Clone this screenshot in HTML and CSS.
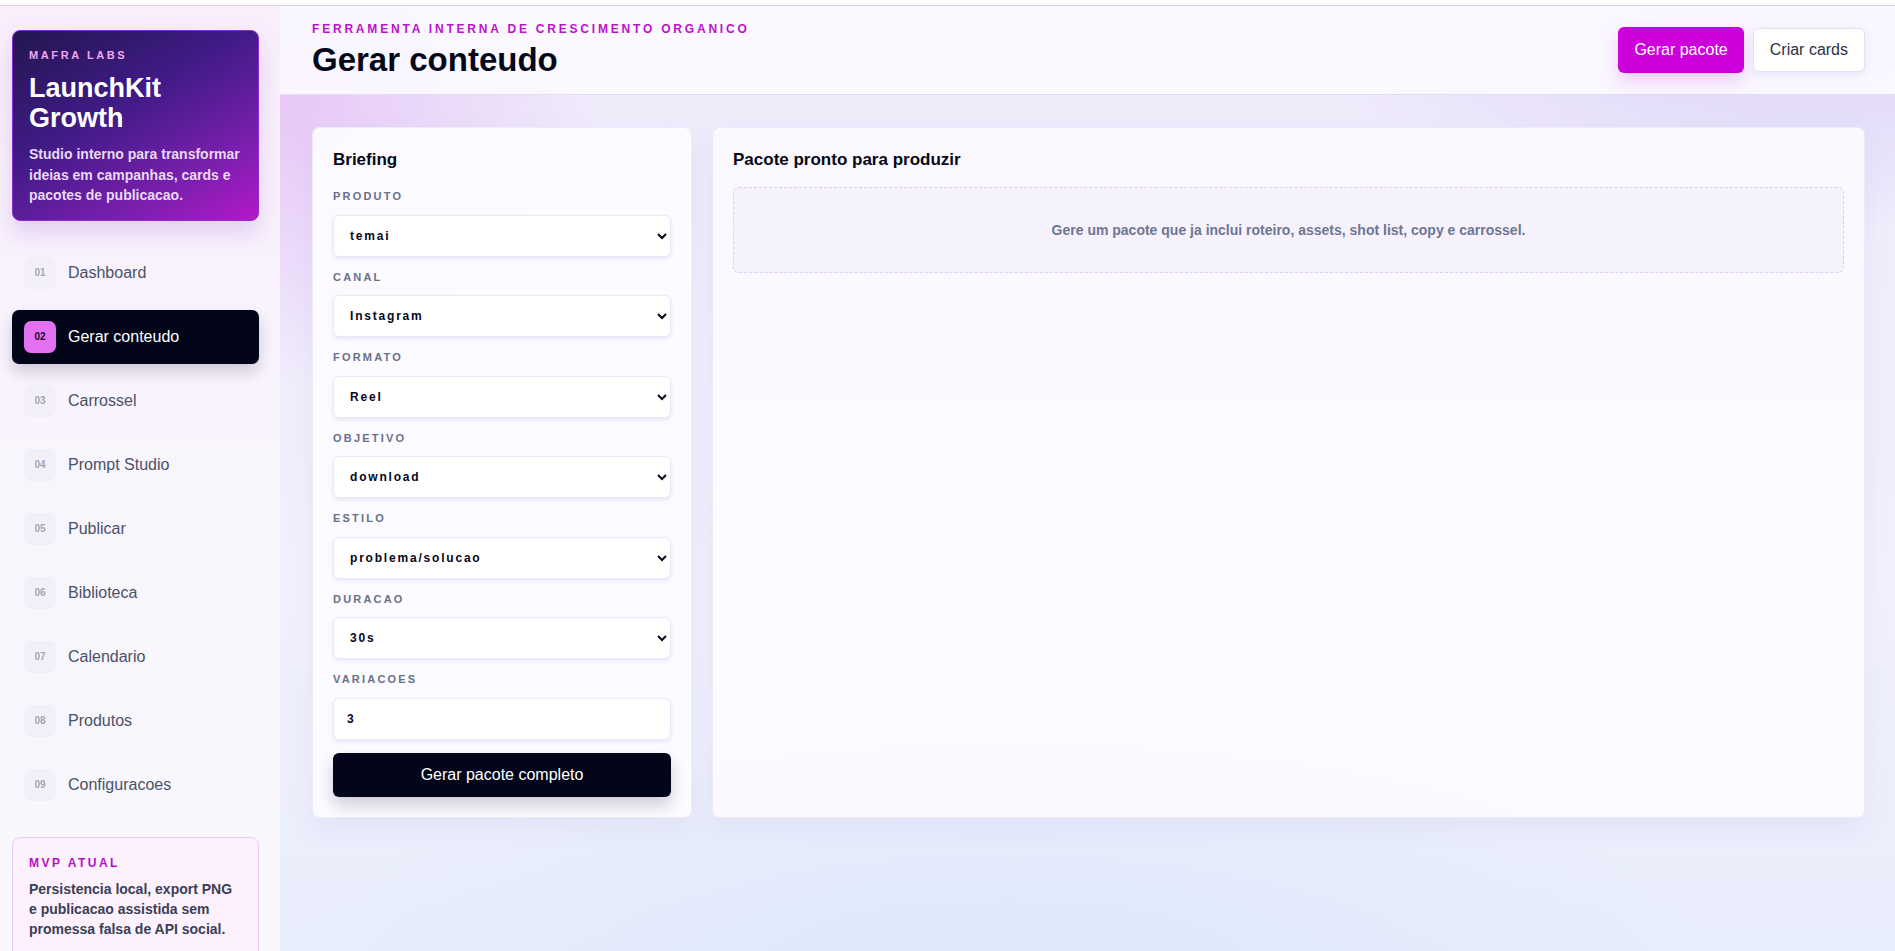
FILE: index.html
```html
<!DOCTYPE html>
<html lang="pt-BR">
<head>
    <meta charset="UTF-8">
    <meta name="viewport" content="width=device-width, initial-scale=1.0">
    <title>Gerar conteudo - LaunchKit Growth</title>
    <link rel="stylesheet" href="styles.css">
</head>
<body>
    <div class="app">
        <!-- Sidebar -->
        <aside class="sidebar">
            <div class="brand">
                <span class="brand-eyebrow">MAFRA LABS</span>
                <h2 class="brand-title">LaunchKit Growth</h2>
                <p class="brand-text">Studio interno para transformar ideias em campanhas, cards e pacotes de publicacao.</p>
            </div>

            <nav class="nav">
                <a href="#" class="nav-item"><span class="nav-num">01</span>Dashboard</a>
                <a href="#" class="nav-item active"><span class="nav-num">02</span>Gerar conteudo</a>
                <a href="#" class="nav-item"><span class="nav-num">03</span>Carrossel</a>
                <a href="#" class="nav-item"><span class="nav-num">04</span>Prompt Studio</a>
                <a href="#" class="nav-item"><span class="nav-num">05</span>Publicar</a>
                <a href="#" class="nav-item"><span class="nav-num">06</span>Biblioteca</a>
                <a href="#" class="nav-item"><span class="nav-num">07</span>Calendario</a>
                <a href="#" class="nav-item"><span class="nav-num">08</span>Produtos</a>
                <a href="#" class="nav-item"><span class="nav-num">09</span>Configuracoes</a>
            </nav>

            <div class="mvp-card">
                <span class="mvp-eyebrow">MVP ATUAL</span>
                <p>Persistencia local, export PNG e publicacao assistida sem promessa falsa de API social.</p>
            </div>
        </aside>

        <!-- Main -->
        <main class="main">
            <header class="topbar">
                <div>
                    <span class="eyebrow">FERRAMENTA INTERNA DE CRESCIMENTO ORGANICO</span>
                    <h1>Gerar conteudo</h1>
                </div>
                <div class="top-actions">
                    <button class="btn btn-primary">Gerar pacote</button>
                    <button class="btn btn-light">Criar cards</button>
                </div>
            </header>

            <section class="content">
                <form class="panel briefing" onsubmit="return false;">
                    <h3>Briefing</h3>
                    <div class="field">
                        <label>PRODUTO</label>
                        <select><option>temai</option></select>
                    </div>
                    <div class="field">
                        <label>CANAL</label>
                        <select><option>Instagram</option><option>TikTok</option></select>
                    </div>
                    <div class="field">
                        <label>FORMATO</label>
                        <select><option>Reel</option><option>Carrossel</option></select>
                    </div>
                    <div class="field">
                        <label>OBJETIVO</label>
                        <select><option>download</option></select>
                    </div>
                    <div class="field">
                        <label>ESTILO</label>
                        <select><option>problema/solucao</option></select>
                    </div>
                    <div class="field">
                        <label>DURACAO</label>
                        <select><option>30s</option><option>15s</option></select>
                    </div>
                    <div class="field">
                        <label>VARIACOES</label>
                        <input type="number" value="3" min="1">
                    </div>
                    <button type="submit" class="btn-dark">Gerar pacote completo</button>
                </form>

                <div class="panel result">
                    <h3>Pacote pronto para produzir</h3>
                    <div class="empty">Gere um pacote que ja inclui roteiro, assets, shot list, copy e carrossel.</div>
                </div>
            </section>
        </main>
    </div>
</body>
</html>
```

FILE: styles.css
```css
html {
    background: #ffffff;
}
body {
    font-family: "Liberation Sans", Arial, sans-serif;
    margin: 0;
    padding: 0;
    color: #050818;
    overflow: hidden;
}
.app {
    display: grid;
    grid-template-columns: 280px 1fr;
    min-height: 945px;
    margin-top: 5px;
    border-top: 1px solid #d5d1e1;
}

/* Sidebar */
.sidebar {
    background: linear-gradient(180deg, #f8eefc 0%, #f9f5fd 45%, #f8f8fd 100%);
    padding: 24px 21px 24px 12px;
}
.brand {
    background: linear-gradient(150deg, #23164f 0%, #3f1b86 40%, #7a1fae 75%, #b418c8 100%);
    border: 1px solid #8b2ad0;
    border-radius: 8px;
    padding: 18px 16px 14px;
    box-shadow: 0 12px 22px rgba(150, 80, 200, 0.22);
}
.brand-eyebrow {
    display: block;
    font-size: 11px;
    line-height: 13px;
    font-weight: 700;
    letter-spacing: 2.6px;
    color: #f3a6f2;
}
.brand-title {
    margin: 11px 0 11px;
    font-size: 27px;
    line-height: 30px;
    color: #ffffff;
}
.brand-text {
    margin: 0;
    font-size: 14px;
    line-height: 20.5px;
    font-weight: 700;
    color: #ead9f3;
}
.nav {
    margin-top: 25px;
    display: flex;
    flex-direction: column;
    gap: 10px;
}
.nav-item {
    display: flex;
    align-items: center;
    gap: 12px;
    padding: 11px 12px;
    border-radius: 7px;
    text-decoration: none;
    font-size: 16px;
    color: #4a5268;
}
.nav-num {
    width: 32px;
    height: 32px;
    border-radius: 7px;
    background: #f2eff9;
    color: #a2a7b8;
    font-size: 10px;
    font-weight: 700;
    display: flex;
    align-items: center;
    justify-content: center;
}
.nav-item.active {
    background: #030619;
    color: #ffffff;
    box-shadow: 0 8px 16px rgba(20, 10, 50, 0.18);
}
.nav-item.active .nav-num {
    background: #e270f0;
    color: #1d0a33;
}
.mvp-card {
    margin-top: 25px;
    border: 1px solid #efc8f6;
    background: #fcf1fd;
    border-radius: 8px;
    padding: 18px 16px 20px;
}
.mvp-eyebrow {
    display: block;
    font-size: 12px;
    line-height: 14px;
    font-weight: 700;
    letter-spacing: 2.5px;
    color: #b211c4;
}
.mvp-card p {
    margin: 9px 0 0;
    font-size: 14px;
    line-height: 20px;
    font-weight: 700;
    color: #3a4056;
}

/* Main */
.main {
    background:
        radial-gradient(ellipse 420px 380px at 0% 10%, rgba(230, 196, 246, 0.9), transparent 75%),
        radial-gradient(ellipse 700px 300px at 95% 0%, rgba(216, 206, 248, 0.9), transparent 75%),
        radial-gradient(ellipse 900px 300px at 45% 100%, rgba(220, 232, 252, 1), transparent 80%),
        linear-gradient(180deg, #efeafb 0%, #f1f0fc 60%, #e8edfb 100%);
}
.topbar {
    display: flex;
    justify-content: space-between;
    align-items: center;
    padding: 16px 30px 16px 32px;
    background: rgba(252, 249, 255, 0.9);
    border-bottom: 1px solid #e2ddf0;
}
.eyebrow {
    display: block;
    font-size: 12px;
    line-height: 14px;
    font-weight: 700;
    letter-spacing: 2.8px;
    color: #bb12cc;
}
h1 {
    margin: 6px 0 0;
    font-size: 33px;
    line-height: 36px;
    color: #050818;
}
.top-actions {
    display: flex;
    gap: 9px;
}
.btn {
    font-family: inherit;
    font-size: 16px;
    height: 46px;
    padding: 0 16px;
    border-radius: 6px;
    cursor: pointer;
}
.btn-primary {
    background: #cc00da;
    color: #ffffff;
    border: none;
    box-shadow: 0 8px 16px rgba(210, 80, 230, 0.25);
}
.btn-light {
    background: #ffffff;
    color: #2b3045;
    border: 1px solid #e4e0f0;
    height: 44px;
    margin-top: 1px;
    box-shadow: 0 3px 8px rgba(120, 100, 200, 0.12);
}
.content {
    display: grid;
    grid-template-columns: 380px 1fr;
    gap: 20px;
    padding: 32px 30px 32px 32px;
    align-items: stretch;
}
.panel {
    background: rgba(253, 252, 255, 0.92);
    border: 1px solid rgba(235, 230, 248, 0.8);
    border-radius: 8px;
    padding: 22px 20px 20px;
    box-shadow: 0 10px 24px rgba(120, 110, 190, 0.08);
}
.panel h3 {
    margin: 0;
    font-size: 17px;
    line-height: 20px;
}
.briefing {
    display: flex;
    flex-direction: column;
    gap: 14px;
}
.briefing h3 {
    margin-bottom: 6px;
}
.field label {
    display: block;
    font-size: 11px;
    line-height: 13px;
    font-weight: 700;
    letter-spacing: 2.2px;
    color: #687089;
    margin-bottom: 11.5px;
}
.field select, .field input {
    display: block;
    width: 100%;
    box-sizing: border-box;
    height: 42px;
    padding: 0 8px 0 12px;
    border: 1px solid #ebe7f7;
    border-radius: 6px;
    background: #ffffff;
    font-family: inherit;
    font-size: 12px;
    font-weight: 700;
    letter-spacing: 1.8px;
    color: #05061a;
    box-shadow: 0 2px 4px rgba(120, 100, 210, 0.14);
}
.field input {
    padding-left: 13px;
}
.btn-dark {
    margin-top: -1px;
    height: 44px;
    border: none;
    border-radius: 6px;
    background: #03061a;
    color: #ffffff;
    font-family: inherit;
    font-size: 16px;
    cursor: pointer;
    box-shadow: 0 8px 16px rgba(20, 10, 60, 0.2);
}
.result {
    background: rgba(251, 250, 255, 0.95);
}
.empty {
    margin-top: 17px;
    height: 86px;
    box-sizing: border-box;
    border: 1px dashed #d9d0f2;
    border-radius: 6px;
    background: #f5f2fe;
    display: flex;
    align-items: center;
    justify-content: center;
    font-size: 14px;
    font-weight: 700;
    color: #6e7691;
}
```
